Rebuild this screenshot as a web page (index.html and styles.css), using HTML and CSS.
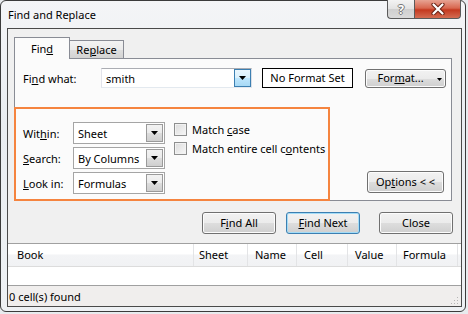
FILE: index.html
```html
<!DOCTYPE html>
<html lang="en">
<head>
  <meta charset="UTF-8" />
  <title>Find and Replace</title>
  <link rel="stylesheet" href="styles.css">
</head>
<body>
  <!-- Dialog window -->
  <div class="window">
    <div class="titlebar">
      <span class="title">Find and Replace</span>
      <div class="caption">
        <span class="cap-help">?</span>
        <span class="cap-close">
          <svg width="14" height="12" viewBox="0 0 14 12">
            <path d="M2.5 1.5 L11.5 10.5 M11.5 1.5 L2.5 10.5" stroke="#6a2416" stroke-width="4.2" stroke-linecap="round"/>
            <path d="M2.5 1.5 L11.5 10.5 M11.5 1.5 L2.5 10.5" stroke="#ffffff" stroke-width="2.2" stroke-linecap="round"/>
          </svg>
        </span>
      </div>
    </div>

    <div class="client">
      <div class="tabs">
        <div class="tab tab-active">Fin<u>d</u></div>
        <div class="tab tab-normal">Re<u>p</u>lace</div>
      </div>

      <div class="panel">
        <div class="find-row">
          <label class="find-label">Fi<u>n</u>d what:</label>
          <div class="combo">
            <span class="combo-text">smith</span>
            <span class="combo-btn hot">
              <svg width="7" height="4" viewBox="0 0 7 4"><path d="M0 0 H7 L3.5 4 Z" fill="#000"/></svg>
            </span>
          </div>
          <div class="no-format">No Format Set</div>
          <button class="btn format-btn">For<u>m</u>at...
            <svg class="format-arrow" width="5" height="3" viewBox="0 0 5 3"><path d="M0 0 H5 L2.5 3 Z" fill="#000"/></svg>
          </button>
        </div>

        <div class="options">
          <div class="highlight">
            <div class="selects">
              <div class="select-row">
                <label class="select-label">Wit<u>h</u>in:</label>
                <div class="select">
                  <span class="select-text">Sheet</span>
                  <span class="select-btn"><svg width="7" height="4" viewBox="0 0 7 4"><path d="M0 0 H7 L3.5 4 Z" fill="#000"/></svg></span>
                </div>
              </div>
              <div class="select-row">
                <label class="select-label"><u>S</u>earch:</label>
                <div class="select">
                  <span class="select-text">By Columns</span>
                  <span class="select-btn"><svg width="7" height="4" viewBox="0 0 7 4"><path d="M0 0 H7 L3.5 4 Z" fill="#000"/></svg></span>
                </div>
              </div>
              <div class="select-row">
                <label class="select-label"><u>L</u>ook in:</label>
                <div class="select">
                  <span class="select-text">Formulas</span>
                  <span class="select-btn"><svg width="7" height="4" viewBox="0 0 7 4"><path d="M0 0 H7 L3.5 4 Z" fill="#000"/></svg></span>
                </div>
              </div>
            </div>
            <div class="checks">
              <div class="check-row"><span class="checkbox"></span><span>Match <u>c</u>ase</span></div>
              <div class="check-row"><span class="checkbox"></span><span>Match entire cell c<u>o</u>ntents</span></div>
            </div>
          </div>
          <button class="btn options-btn">Op<u>t</u>ions &lt; &lt;</button>
        </div>
      </div>

      <div class="actions">
        <button class="btn action-btn">F<u>i</u>nd All</button>
        <button class="btn action-btn default"><u>F</u>ind Next</button>
        <button class="btn action-btn close-btn">Close</button>
      </div>

      <div class="results">
        <div class="list-head">
          <div class="col col-book">Book</div>
          <div class="col col-sheet">Sheet</div>
          <div class="col col-mid">Name</div>
          <div class="col col-mid">Cell</div>
          <div class="col col-mid">Value</div>
          <div class="col col-formula">Formula</div>
          <div class="col col-rest"></div>
        </div>
        <div class="list-body"></div>
      </div>

      <div class="status">
        <span>0 cell(s) found</span>
        <svg class="grip" width="8" height="8" viewBox="0 0 8 8">
          <rect x="6" y="0" width="1" height="1" fill="#b5b5b5"/>
          <rect x="3" y="3" width="1" height="1" fill="#b5b5b5"/>
          <rect x="6" y="3" width="1" height="1" fill="#b5b5b5"/>
          <rect x="0" y="6" width="1" height="1" fill="#b5b5b5"/>
          <rect x="3" y="6" width="1" height="1" fill="#b5b5b5"/>
          <rect x="6" y="6" width="1" height="1" fill="#b5b5b5"/>
        </svg>
      </div>
    </div>
  </div>
</body>
</html>
```

FILE: styles.css
```css
* {
  box-sizing: border-box;
}

body {
  margin: 0;
  background: #e8ebee;
  font-family: "Noto Sans", "Open Sans", sans-serif;
  font-size: 11px;
  color: #000;
}

u {
  text-decoration: underline;
  text-underline-offset: 1px;
}

.window {
  width: 466px;
  height: 312px;
  border: 1px solid #3b3b3b;
  border-radius: 6px;
  background: linear-gradient(180deg, #f4f5f7, #e9edf1 40%, #eef1f4);
  padding: 0 3px 4px 6px;
  display: flex;
  flex-direction: column;
}

/* title bar */

.titlebar {
  height: 27px;
  display: flex;
  align-items: flex-start;
}

.title {
  padding: 6px 0 0 1px;
  line-height: 15px;
}

.caption {
  margin-left: auto;
  margin-right: 1px;
  margin-top: -1px;
  display: flex;
}

.cap-help,
.cap-close {
  height: 19px;
  display: flex;
  align-items: center;
  justify-content: center;
  border: 1px solid #5a5a5a;
  border-top: none;
}

.cap-help {
  width: 27px;
  border-right: none;
  border-radius: 0 0 0 4px;
  background: linear-gradient(180deg, #f3f3f3, #e2e2e2 50%, #cfcfcf 51%, #dadada);
  color: #fff;
  font-weight: bold;
  font-size: 12px;
  text-shadow: 1px 0 #777, -1px 0 #777, 0 1px #777, 0 -1px #777;
}

.cap-close {
  width: 47px;
  border-radius: 0 0 4px 0;
  background: linear-gradient(180deg, #e7a393, #d8674f 45%, #c4391f 55%, #d46c52);
}

/* client area */

.client {
  flex: 1;
  border: 1px solid #4a4a4a;
  background: #f0f0f0;
  display: flex;
  flex-direction: column;
}

.tabs {
  display: flex;
  align-items: flex-end;
  height: 22px;
  margin: 8px 0 0 6px;
  position: relative;
  z-index: 1;
}

.tab {
  border: 1px solid #898c95;
  border-bottom: none;
  text-align: center;
  line-height: 15px;
}

.tab-active {
  width: 56px;
  height: 22px;
  padding-top: 3px;
  background: #fbfbfb;
}

.tab-normal {
  width: 55px;
  height: 18px;
  margin: 0 0 1px -1px;
  padding-top: 1px;
  background: linear-gradient(180deg, #f3f3f3, #ebebeb 50%, #dedede 51%, #d3d3d3);
}

.panel {
  height: 143px;
  margin: -1px 9px 0 6px;
  border: 1px solid #898c95;
  background: #fbfbfb;
}

.find-row {
  display: flex;
  align-items: center;
  height: 20px;
  margin-top: 9px;
  padding-left: 8px;
}

.find-label {
  width: 78px;
}

.combo {
  width: 151px;
  height: 20px;
  border: 1px solid #abadb3;
  border-color: #abadb3 #dbdfe6 #e3e9ef #e2e3ea;
  background: #fff;
  display: flex;
  align-items: center;
}

.combo-text {
  flex: 1;
  padding-left: 4px;
}

.combo-btn,
.select-btn {
  width: 17px;
  align-self: stretch;
  display: flex;
  align-items: center;
  justify-content: center;
  border: 1px solid #707070;
  background: linear-gradient(180deg, #f2f2f2, #ebebeb 50%, #dddddd 51%, #cfcfcf);
}

.combo-btn.hot {
  border-color: #3c7fb1;
  background: linear-gradient(180deg, #eaf6fd, #d9f0fc 50%, #bee6fd 51%, #a7d9f5);
}

.no-format {
  width: 91px;
  height: 20px;
  margin-left: 10px;
  border: 1px solid #000;
  background: #fff;
  text-align: center;
  line-height: 18px;
}

.btn {
  font-family: inherit;
  font-size: 11px;
  color: #000;
  height: 22px;
  padding: 0;
  border: 1px solid #707070;
  border-radius: 3px;
  background: linear-gradient(180deg, #f2f2f2, #ebebeb 50%, #dddddd 51%, #cfcfcf);
  box-shadow: inset 0 0 0 1px #fcfcfc;
  line-height: 18px;
}

.format-btn {
  width: 81px;
  height: 19px;
  margin-left: 12px;
  padding-left: 8px;
  position: relative;
  line-height: 16px;
}

.format-arrow {
  margin-left: 10px;
  vertical-align: 1px;
}

/* options block */

.options {
  display: flex;
  align-items: flex-end;
  margin-top: 19px;
}

.highlight {
  width: 316px;
  height: 94px;
  margin: 0 0 -1px -1px;
  border: 2px solid #f5843f;
  padding: 13px 0 0 7px;
  display: flex;
}

.select-row {
  display: flex;
  align-items: center;
  height: 22px;
  margin-bottom: 3px;
}

.select-label {
  width: 50px;
}

.select {
  width: 92px;
  height: 22px;
  border: 1px solid #a5a5a5;
  background: #fff;
  display: flex;
  align-items: center;
  padding: 1px;
}

.select-text {
  flex: 1;
  padding-left: 3px;
}

.select-btn {
  border-color: #9a9a9a;
}

.checks {
  margin-left: 9px;
  padding-top: 1px;
}

.check-row {
  display: flex;
  align-items: center;
  height: 13px;
  margin-bottom: 6px;
  white-space: nowrap;
}

.checkbox {
  width: 13px;
  height: 13px;
  margin-right: 5px;
  border: 1px solid #8e8f8f;
  background: linear-gradient(135deg, #dcdcdc, #f7f7f7);
  box-shadow: inset 0 0 0 1px #f2f2f2;
}

.options-btn {
  width: 77px;
  margin: 0 7px 7px auto;
}

/* buttons row */

.actions {
  display: flex;
  justify-content: flex-end;
  margin-top: 11px;
  padding-right: 8px;
}

.action-btn {
  width: 74px;
  margin-left: 10px;
}

.action-btn.default {
  border-color: #3c7fb1;
  box-shadow: inset 0 0 0 1px #a3dcf7;
}

.close-btn {
  margin-left: 19px;
}

/* results list */

.results {
  margin-top: 9px;
  border-top: 1px solid #a0a0a0;
  border-bottom: 1px solid #a0a0a0;
  background: #fff;
}

.list-head {
  display: grid;
  grid-template-columns: 186px 54px 49px 51px 49px 61px 1fr;
  height: 23px;
  border-bottom: 1px solid #dcdcdc;
  background: linear-gradient(180deg, #ffffff, #ffffff 45%, #f3f4f6 50%, #f1f2f4);
}

.col {
  border-right: 1px solid #e3e4e6;
  line-height: 22px;
  padding-left: 7px;
}

.col-book {
  padding-left: 9px;
}

.col-sheet {
  padding-left: 5px;
}

.col-formula {
  padding-left: 6px;
}

.col-rest {
  border-right: none;
}

.list-body {
  height: 18px;
}

.status {
  height: 20px;
  display: flex;
  align-items: center;
  padding: 0 2px 0 1px;
  background: #f0eeed;
}

.grip {
  margin-left: auto;
  margin-top: 10px;
}
```
